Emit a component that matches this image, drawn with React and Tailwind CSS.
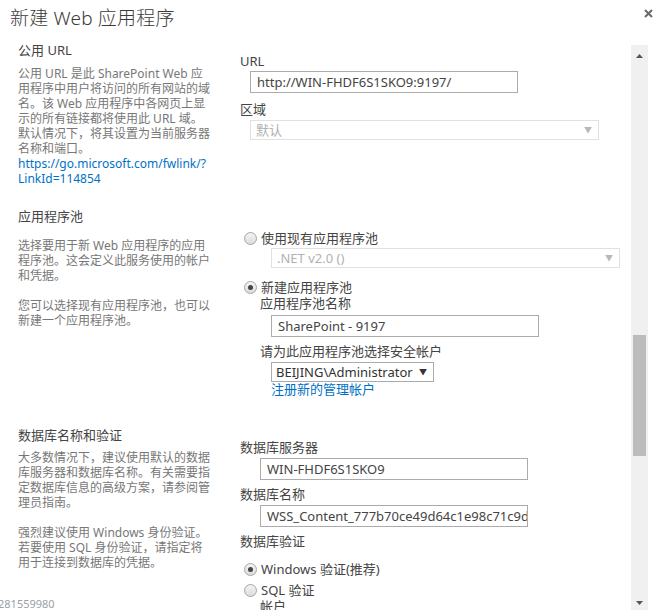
import React from "react";

function Radio({ checked }) {
  return (
    <span className="relative inline-block w-[13px] h-[13px] rounded-full border border-[#a6a6a6] bg-gradient-to-b from-[#f4f4f4] to-[#dcdcdc] shrink-0">
      {checked && (
        <span className="absolute left-[3px] top-[3px] w-[5px] h-[5px] rounded-full bg-[#444]" />
      )}
    </span>
  );
}

function TextBox({ value, className }) {
  return (
    <div
      className={
        "h-[22px] border border-[#ababab] bg-white pl-[6px] text-[13px] leading-[20px] text-[#444] whitespace-nowrap overflow-hidden " +
        className
      }
    >
      {value}
    </div>
  );
}

function DisabledSelect({ value, className }) {
  return (
    <div
      className={
        "h-[20px] border border-[#e1e1e1] bg-white pl-[5px] pr-[6px] flex items-center justify-between text-[13px] leading-[18px] text-[#b1b1b1] " +
        className
      }
    >
      <span>{value}</span>
      <span className="text-[8px] text-[#b8b8b8]">▼</span>
    </div>
  );
}

// description text keeps the line breaks of the original dialog
function Desc({ lines, className = "" }) {
  return (
    <div className={"text-[12px] leading-[15px] text-[#777] whitespace-nowrap " + className}>
      {lines.map((l, i) => (
        <div key={i}>{l}</div>
      ))}
    </div>
  );
}

export default function App() {
  return (
    <div className="w-[664px] h-[610px] overflow-hidden bg-white font-['Noto_Sans','Noto_Sans_CJK_SC',sans-serif]">
      {/* header */}
      <div className="h-[45px] flex items-start justify-between pl-[10px] pr-[11px]">
        <h1 className="mt-[6px] text-[19px] leading-[24px] font-light text-[#3a3a3a] tracking-[0.2px]">新建 Web 应用程序</h1>
        <svg className="mt-[9px]" width="9" height="9" viewBox="0 0 9 9">
          <path d="M1 1 L8 8 M8 1 L1 8" stroke="#6a6a6a" strokeWidth="2" />
        </svg>
      </div>

      <div className="flex h-[565px]">
        {/* scrolled content */}
        <div className="w-[631px] h-full overflow-hidden pl-[18px]">
          {/* section 1: 公用 URL */}
          <div className="flex items-start">
            <div className="w-[200px] -mt-[3px]">
              <h2 className="text-[13px] leading-[16px] text-[#444]">公用 URL</h2>
              <Desc
                className="mt-[8px]"
                lines={[
                  "公用 URL 是此 SharePoint Web 应",
                  "用程序中用户将访问的所有网站的域",
                  "名。该 Web 应用程序中各网页上显",
                  "示的所有链接都将使用此 URL 域。",
                  "默认情况下，将其设置为当前服务器",
                  "名称和端口。",
                ]}
              />
              <a className="block text-[12px] leading-[15px] text-[#0072c6]">
                https://go.microsoft.com/fwlink/?
                <br />
                LinkId=114854
              </a>
            </div>
            <div className="ml-[22px] w-[380px] pt-[8px]">
              <div className="text-[13px] leading-[16px] text-[#444]">URL</div>
              <TextBox value="http://WIN-FHDF6S1SKO9:9197/" className="mt-[2px] ml-[10px] w-[268px]" />
              <div className="mt-[8px] text-[13px] leading-[16px] text-[#444]">区域</div>
              <DisabledSelect value="默认" className="mt-[3px] ml-[10px] w-[349px]" />
            </div>
          </div>

          {/* section 2: 应用程序池 */}
          <div className="flex items-start mt-[14px]">
            <div className="w-[200px] pt-[8px]">
              <h2 className="text-[13px] leading-[16px] text-[#444]">应用程序池</h2>
              <Desc
                className="mt-[14px]"
                lines={[
                  "选择要用于新 Web 应用程序的应用",
                  "程序池。这会定义此服务使用的帐户",
                  "和凭据。",
                ]}
              />
              <Desc
                className="mt-[15px]"
                lines={["您可以选择现有应用程序池，也可以", "新建一个应用程序池。"]}
              />
            </div>
            <div className="ml-[22px] w-[380px] pt-[30px] text-[13px] leading-[16px] text-[#444]">
              <div className="flex items-center gap-[4px] pl-[4px]">
                <Radio />
                <span>使用现有应用程序池</span>
              </div>
              <DisabledSelect value=".NET v2.0 ()" className="mt-[2px] ml-[31px] w-[349px]" />
              <div className="mt-[11px] flex items-center gap-[4px] pl-[4px]">
                <Radio checked />
                <span>新建应用程序池</span>
              </div>
              <div className="ml-[20px]">应用程序池名称</div>
              <TextBox value="SharePoint - 9197" className="mt-[4px] ml-[31px] w-[268px]" />
              <div className="mt-[6px] ml-[20px]">请为此应用程序池选择安全帐户</div>
              <div className="mt-[3px] ml-[31px] w-[163px] h-[20px] border border-[#ababab] pl-[4px] pr-[6px] flex items-center justify-between text-[#333]">
                <span>BEIJING\Administrator</span>
                <span className="text-[8px] text-[#333]">▼</span>
              </div>
              <a className="block ml-[31px] leading-[14px] text-[#0072c6]">注册新的管理帐户</a>
            </div>
          </div>

          {/* section 3: 数据库 */}
          <div className="flex items-start mt-[24px]">
            <div className="w-[200px] pt-[7px]">
              <h2 className="text-[13px] leading-[16px] text-[#444]">数据库名称和验证</h2>
              <Desc
                className="mt-[7px]"
                lines={[
                  "大多数情况下，建议使用默认的数据",
                  "库服务器和数据库名称。有关需要指",
                  "定数据库信息的高级方案，请参阅管",
                  "理员指南。",
                ]}
              />
              <Desc
                className="mt-[15px]"
                lines={[
                  "强烈建议使用 Windows 身份验证。",
                  "若要使用 SQL 身份验证，请指定将",
                  "用于连接到数据库的凭据。",
                ]}
              />
              <div className="-ml-[20px] mt-[27px] text-[11px] leading-[13px] text-[#9aa0a8]">281559980</div>
            </div>
            <div className="ml-[22px] w-[380px] pt-[19px] text-[13px] leading-[16px] text-[#444]">
              <div>数据库服务器</div>
              <TextBox value="WIN-FHDF6S1SKO9" className="mt-[3px] ml-[20px] w-[268px]" />
              <div className="mt-[6px]">数据库名称</div>
              <TextBox value="WSS_Content_777b70ce49d64c1e98c71c9d8a0" className="mt-[3px] ml-[20px] w-[268px]" />
              <div className="mt-[6px]">数据库验证</div>
              <div className="mt-[12px] flex items-center gap-[4px] pl-[4px]">
                <Radio checked />
                <span>Windows 验证(推荐)</span>
              </div>
              <div className="mt-[5px] flex items-center gap-[4px] pl-[4px]">
                <Radio />
                <span>SQL 验证</span>
              </div>
              <div className="ml-[20px]">帐户</div>
            </div>
          </div>
        </div>

        {/* scrollbar */}
        <div className="w-[17px] h-full bg-[#f0f0f0] flex flex-col items-center">
          <svg className="mt-[9px]" width="7" height="4" viewBox="0 0 7 4">
            <path d="M0 4 L3.5 0 L7 4 Z" fill="#555" />
          </svg>
          <div className="mt-[277px] w-[13px] h-[121px] bg-[#bcbcbc]" />
          <div className="flex-1" />
          <svg className="mb-[5px]" width="7" height="4" viewBox="0 0 7 4">
            <path d="M0 0 L3.5 4 L7 0 Z" fill="#555" />
          </svg>
        </div>
      </div>
    </div>
  );
}
